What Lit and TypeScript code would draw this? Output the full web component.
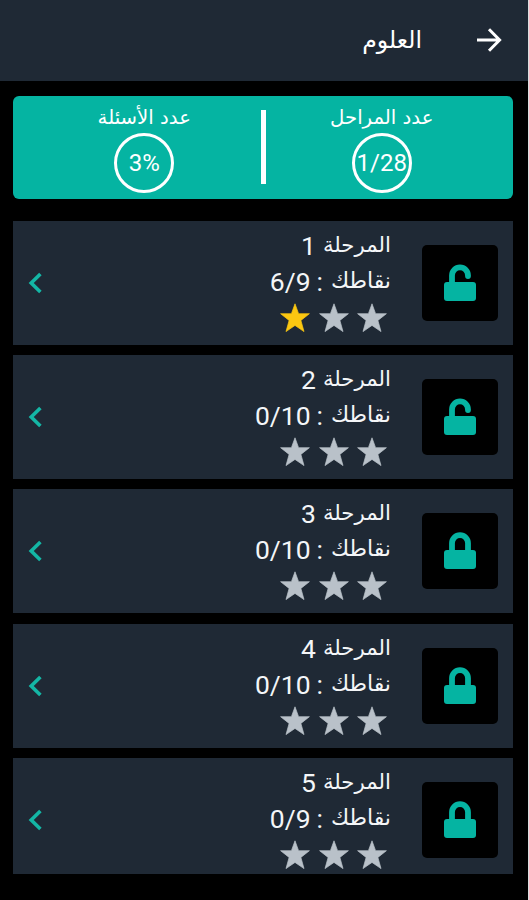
import { LitElement, html, css, svg } from "lit";
import { customElement, property } from "lit/decorators.js";

interface Stage {
  n: number;
  score: string;
  stars: number;
  open: boolean;
}

const STAGES: Stage[] = [
  { n: 1, score: "6/9", stars: 1, open: true },
  { n: 2, score: "0/10", stars: 0, open: true },
  { n: 3, score: "0/10", stars: 0, open: false },
  { n: 4, score: "0/10", stars: 0, open: false },
  { n: 5, score: "0/9", stars: 0, open: false },
];

const OPEN_SHACKLE = svg`<path d="M8 19V11.4a8 8 0 0 1 16 0V12" />`;
const CLOSED_SHACKLE = svg`<path d="M8 19v-7.8a8 8 0 0 1 16 0V19"/>`;

@customElement("stage-row")
export class StageRow extends LitElement {
  @property({ attribute: false }) stage!: Stage;

  static styles = css`
    :host {
      display: flex;
      direction: rtl;
      height: 124px;
      flex: none;
      box-sizing: border-box;
      padding: 0 15px;
      align-items: center;
      background: #1f2935;
      color: #f4f6f8;
      font-family: Roboto, "DejaVu Sans", sans-serif;
    }
    .badge {
      width: 76px;
      height: 76px;
      border-radius: 5px;
      background: #000;
      display: flex;
      align-items: center;
      justify-content: center;
      flex: none;
    }
    .lock {
      width: 32px;
      height: 38px;
      display: block;
      fill: #05b4a2;
    }
    .lock path {
      fill: none;
      stroke: #05b4a2;
      stroke-width: 5.8;
      stroke-linecap: round;
    }
    .info {
      flex: 1;
      height: 124px;
      margin-right: 31px;
      padding-top: 7px;
      box-sizing: border-box;
    }
    .line {
      display: flex;
      height: 36px;
      line-height: 36px;
      font-size: 26.5px;
      white-space: pre;
    }
    .word {
      font-family: "DejaVu Sans", sans-serif;
      font-size: 22px;
      line-height: 34px;
    }
    .word.name {
      font-size: 21.3px;
    }
    .num {
      direction: ltr;
      margin-right: 7px;
    }
    .colon {
      margin-right: 8px;
    }
    .score {
      direction: ltr;
      margin-right: 6px;
    }
    .stars {
      display: flex;
      gap: 8.4px;
      padding: 3px 4px 0 0;
    }
    .star {
      width: 30px;
      height: 30px;
      fill: #b9c1c9;
      stroke: #b9c1c9;
      stroke-width: 0.7;
    }
    .star.on {
      fill: #fbc711;
      stroke: #fbc711;
    }
    .chevron {
      width: 14px;
      height: 22px;
      fill: none;
      stroke: #14b6a5;
      stroke-width: 3.6;
    }
  `;

  render() {
    const s = this.stage;
    return html`
      <div class="badge">
        <svg class="lock" viewBox="0 0 32 38">
          ${s.open ? OPEN_SHACKLE : CLOSED_SHACKLE}
          <rect x="0" y="18" width="32" height="19" rx="3" />
        </svg>
      </div>
      <div class="info">
        <div class="line"><span class="word name">المرحلة</span><span class="num">${s.n}</span></div>
        <div class="line"><span class="word">نقاطك</span><span class="colon">:</span><span class="score">${s.score}</span></div>
        <div class="stars">
          ${[0, 1, 2].map(
            (i) => html`<svg class="star ${i >= 3 - s.stars ? "on" : ""}" viewBox="0 0 30 30">
              <path d="M15 .8 18.6 10.7H29.4L20.9 17.4 24 28.6 15 22.4 6 28.6 9.1 17.4.6 10.7H11.4Z" />
            </svg>`
          )}
        </div>
      </div>
      <svg class="chevron" viewBox="0 0 14 22"><path d="M12.4 2 3.2 11l9.2 9" /></svg>
    `;
  }
}

@customElement("app-root")
export class AppRoot extends LitElement {
  static styles = css`
    :host {
      display: flex;
      flex-direction: column;
      direction: rtl;
      width: 529px;
      height: 900px;
      box-sizing: border-box;
      overflow: hidden;
      background: #000;
      color: #fff;
      border-right: 1px solid #dcdee0;
      font-family: Roboto, "DejaVu Sans", sans-serif;
    }
    .top {
      height: 80.5px;
      flex: none;
      background: #1f2935;
      display: flex;
      align-items: center;
      padding-right: 26px;
      box-sizing: border-box;
    }
    .back {
      width: 26px;
      height: 26px;
      fill: none;
      stroke: #fff;
      stroke-width: 3;
    }
    .title {
      font: 23.6px/40px "DejaVu Sans", sans-serif;
      margin-right: 54px;
      padding-bottom: 1px;
    }
    .summary {
      margin: 15px 15px 22px 13px;
      height: 103px;
      flex: none;
      border-radius: 6px;
      background: #05b4a2;
      display: flex;
      align-items: center;
    }
    .stat {
      flex: 1;
      height: 103px;
      display: flex;
      flex-direction: column;
      align-items: center;
    }
    .stat.stages {
      padding-right: 15px;
    }
    .stat.questions {
      padding-left: 15px;
    }
    .label {
      font: 19.7px/22px "DejaVu Sans", sans-serif;
      height: 22px;
      margin-top: 11px;
      white-space: nowrap;
    }
    .ring {
      width: 60px;
      height: 60px;
      box-sizing: border-box;
      border: 3px solid #fff;
      border-radius: 50%;
      margin-top: 4px;
      display: flex;
      align-items: center;
      justify-content: center;
      direction: ltr;
      font-size: 24px;
      line-height: 28px;
      padding-top: 1px;
      white-space: nowrap;
    }
    .rule {
      width: 5px;
      height: 74px;
      background: #fff;
    }
    .list {
      height: 653.5px;
      flex: none;
      margin: 0 15px 0 13px;
      overflow: hidden;
      display: flex;
      flex-direction: column;
      gap: 10.4px;
    }
  `;

  render() {
    return html`
      <header class="top">
        <svg class="back" viewBox="0 0 26 26"><path d="M1 13H23M13 2.2 23.6 13 13 23.8" /></svg>
        <span class="title">العلوم</span>
      </header>
      <section class="summary">
        <div class="stat stages"><span class="label">عدد المراحل</span><span class="ring">1/28</span></div>
        <div class="rule"></div>
        <div class="stat questions"><span class="label">عدد الأسئلة</span><span class="ring">3%</span></div>
      </section>
      <main class="list">
        ${STAGES.map((s) => html`<stage-row .stage=${s}></stage-row>`)}
      </main>
    `;
  }
}
